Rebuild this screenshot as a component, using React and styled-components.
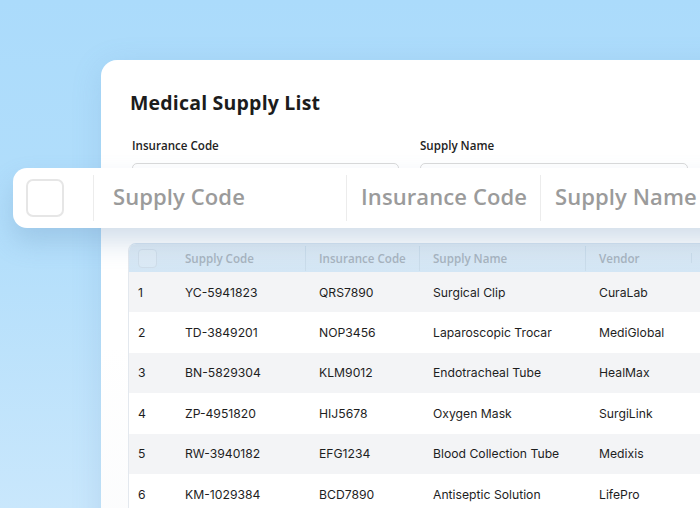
import styled, { createGlobalStyle } from "styled-components"

const Global = createGlobalStyle`
  html, body { margin: 0; padding: 0; }
  body { font-family: "Inter", "Liberation Sans", sans-serif; }
`

const Page = styled.div`
  position: relative;
  width: 700px;
  height: 508px;
  overflow: hidden;
  background: linear-gradient(180deg, #abdbfb 0%, #b2defb 45%, #c9e7fc 100%);
`

const Card = styled.div`
  margin: 60px 0 0 101px;
  width: 680px;
  height: 520px;
  box-sizing: border-box;
  padding: 30px 0 0 27px;
  background: linear-gradient(180deg, #ffffff 0%, #ffffff 55%, #fafbfc 100%);
  border-radius: 16px 0 0 0;
  box-shadow: 0 6px 30px rgba(90, 140, 190, 0.18);
`

const Title = styled.h1`
  margin: 0 0 0 2px;
  font-family: "Open Sans", sans-serif;
  font-weight: 700;
  font-size: 19.5px;
  line-height: 26px;
  letter-spacing: 0.2px;
  color: #1c1c1c;
`

const Filters = styled.div`
  display: grid;
  grid-template-columns: 267px 268px;
  column-gap: 21px;
  margin: 22px 0 0 4px;
`

const Field = styled.div`
  display: flex;
  flex-direction: column;
  row-gap: 9px;
`

const Label = styled.label`
  font-family: "Open Sans", sans-serif;
  font-weight: 600;
  font-size: 11.6px;
  line-height: 16px;
  color: #222;
`

const Input = styled.div`
  height: 40px;
  border: 1px solid #dadada;
  border-radius: 5px;
  background: #fff;
`

const Table = styled.div`
  margin-top: 38px;
  border-left: 1px solid #e3e8ee;
  border-top: 1px solid #d5e3ef;
  border-radius: 8px 0 0 0;
  overflow: hidden;
`

const cols = "42px 134px 114px 166px 106px 1fr"

const HeadRow = styled.div`
  display: grid;
  grid-template-columns: ${cols};
  height: 28px;
  align-items: center;
  background: linear-gradient(180deg, #dde9f3 0%, #d3e6f5 100%);
`

const HeadCell = styled.div`
  position: relative;
  padding-left: ${p => (p.$first ? "9px" : "14px")};
  font-family: "Open Sans", sans-serif;
  font-weight: 600;
  font-size: 11.6px;
  color: #a7b3be;
  white-space: nowrap;
  &::before {
    content: "";
    display: ${p => (p.$divider ? "block" : "none")};
    position: absolute;
    left: 0;
    top: -5px;
    bottom: -5px;
    width: 1px;
    background: #cadcea;
  }
`

const SmallBox = styled.div`
  width: 17px;
  height: 17px;
  border: 1px solid #cfdde9;
  border-radius: 4px;
  background: rgba(255, 255, 255, 0.15);
`

const Row = styled.div`
  display: grid;
  grid-template-columns: ${cols};
  height: 40.4px;
  align-items: center;
  background: ${p => (p.$odd ? "#f3f4f6" : "#ffffff")};
`

const Cell = styled.div`
  padding-left: ${p => (p.$first ? "9px" : "14px")};
  font-size: 12.2px;
  color: #1e1e1e;
  white-space: nowrap;
`

const FloatBar = styled.div`
  position: absolute;
  left: 13px;
  top: 168px;
  width: 720px;
  height: 60px;
  display: flex;
  align-items: center;
  background: #ffffff;
  border-radius: 14px 0 0 14px;
  box-shadow: 0 14px 26px rgba(110, 150, 190, 0.3);
`

const BigBox = styled.div`
  flex: none;
  width: 34px;
  height: 34px;
  margin: 0 29px 0 13px;
  border: 2px solid #e6e6e6;
  border-radius: 7px;
`

const BarCell = styled.div`
  flex: none;
  width: ${p => p.$w}px;
  height: 46px;
  box-sizing: border-box;
  display: flex;
  align-items: center;
  padding: 0 0 4px ${p => p.$pad}px;
  border-left: 1px solid #ececec;
  font-family: "Open Sans", sans-serif;
  font-weight: 600;
  font-size: 22px;
  letter-spacing: 0.1px;
  color: #9b9b9b;
  white-space: nowrap;
`

const rows = [
  ["1", "YC-5941823", "QRS7890", "Surgical Clip", "CuraLab"],
  ["2", "TD-3849201", "NOP3456", "Laparoscopic Trocar", "MediGlobal"],
  ["3", "BN-5829304", "KLM9012", "Endotracheal Tube", "HealMax"],
  ["4", "ZP-4951820", "HIJ5678", "Oxygen Mask", "SurgiLink"],
  ["5", "RW-3940182", "EFG1234", "Blood Collection Tube", "Medixis"],
  ["6", "KM-1029384", "BCD7890", "Antiseptic Solution", "LifePro"],
]

export default function App() {
  return (
    <Page>
      <Global />
      <Card>
        <Title>Medical Supply List</Title>
        <Filters>
          <Field>
            <Label>Insurance Code</Label>
            <Input />
          </Field>
          <Field>
            <Label>Supply Name</Label>
            <Input />
          </Field>
        </Filters>
        <Table>
          <HeadRow>
            <HeadCell $first><SmallBox /></HeadCell>
            <HeadCell>Supply Code</HeadCell>
            <HeadCell $divider>Insurance Code</HeadCell>
            <HeadCell $divider>Supply Name</HeadCell>
            <HeadCell $divider>Vendor</HeadCell>
            <HeadCell $divider />
          </HeadRow>
          {rows.map((r, i) => (
            <Row key={r[0]} $odd={i % 2 === 0}>
              {r.map((v, j) => (
                <Cell key={j} $first={j === 0}>{v}</Cell>
              ))}
              <Cell />
            </Row>
          ))}
        </Table>
      </Card>
      <FloatBar>
        <BigBox />
        <BarCell $w={253} $pad={19}>Supply Code</BarCell>
        <BarCell $w={194} $pad={14}>Insurance Code</BarCell>
        <BarCell $w={200} $pad={14}>Supply Name</BarCell>
      </FloatBar>
    </Page>
  )
}
